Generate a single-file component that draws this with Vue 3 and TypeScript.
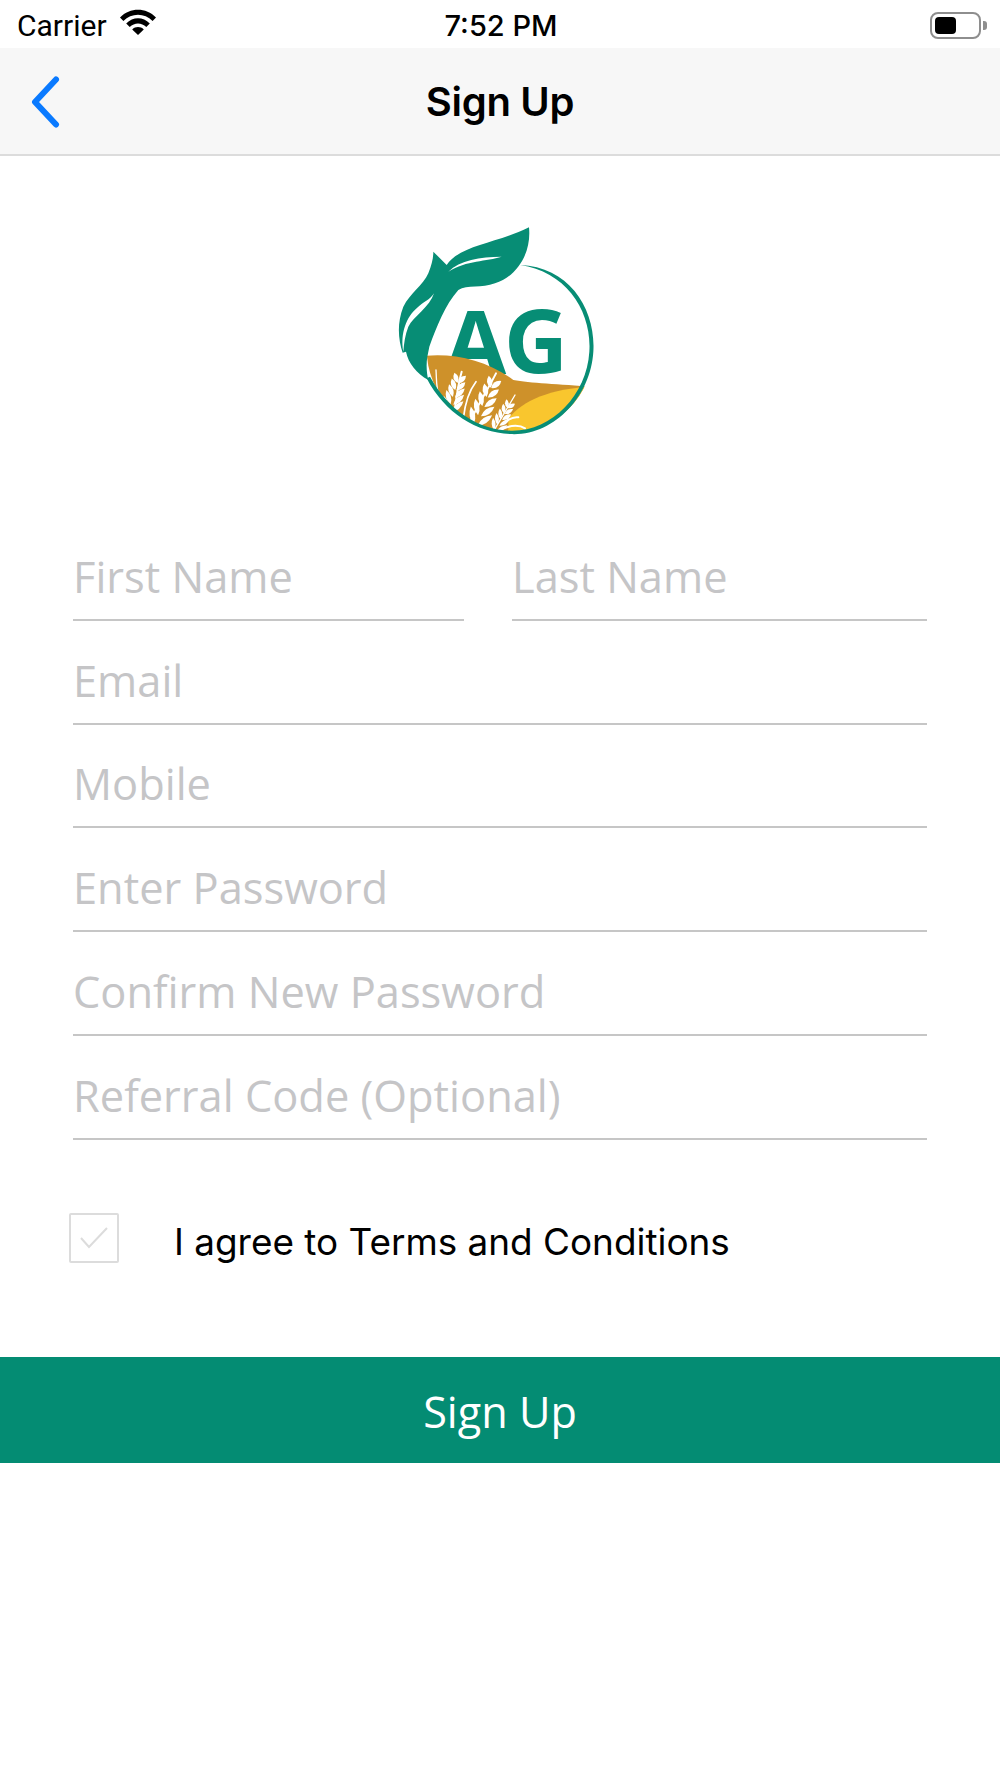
<script setup lang="ts">
interface Ear {
  x1: number;
  y1: number;
  x2: number;
  y2: number;
  size: number;
}

const nameFields = ["First Name", "Last Name"];
const fields = ["Email", "Mobile", "Enter Password", "Confirm New Password", "Referral Code (Optional)"];

const ears: Ear[] = [
  { x1: 210, y1: 605, x2: 240, y2: 495, size: 24 },
  { x1: 285, y1: 650, x2: 345, y2: 505, size: 27 },
  { x1: 345, y1: 665, x2: 392, y2: 575, size: 19 },
];

// grain pairs along each ear, leaning out from the stalk
function grains(ear: Ear) {
  const out: { x: number; y: number; rot: number; d: string }[] = [];
  const dx = ear.x2 - ear.x1;
  const dy = ear.y2 - ear.y1;
  const len = Math.hypot(dx, dy);
  const angle = (Math.atan2(dy, dx) * 180) / Math.PI;
  const nx = -dy / len;
  const ny = dx / len;
  for (let i = 0; i < 5; i++) {
    const t = 0.18 + i * 0.18;
    const spread = ear.size * (1 - i * 0.12) * 0.75;
    const rx = ear.size * (1 - i * 0.08);
    const ry = ear.size * 0.62;
    for (const side of [-1, 1]) {
      out.push({
        x: ear.x1 + dx * t + nx * spread * side,
        y: ear.y1 + dy * t + ny * spread * side,
        rot: angle + 32 * side,
        d: `M${-rx} 0Q0 ${-ry} ${rx} 0Q0 ${ry} ${-rx} 0Z`,
      });
    }
  }
  return out;
}
</script>

<template>
  <main class="page">
    <div class="status-bar">
      <div class="status-left">
        <span class="carrier">Carrier</span>
        <svg class="wifi" viewBox="0 0 38 26" width="38" height="26">
          <path d="M1 8.5C11 -1.8 27 -1.8 37 8.5L33.6 12C25.5 3.8 12.5 3.8 4.4 12Z" fill="#000" />
          <path d="M7.2 14.6C14 7.6 24 7.6 30.8 14.6L27.3 18C22.5 13.2 15.5 13.2 10.7 18Z" fill="#000" />
          <path d="M13.2 20.4C16.5 17.2 21.5 17.2 24.8 20.4L19 26Z" fill="#000" />
        </svg>
      </div>
      <span class="time">7:52 PM</span>
      <div class="battery">
        <div class="battery-body"><div class="battery-level"></div></div>
        <div class="battery-cap"></div>
      </div>
    </div>

    <header class="nav">
      <button class="back" aria-label="Back">
        <svg viewBox="0 0 30 52" width="30" height="52">
          <path d="M26 3.5L5 26L26 48.5" fill="none" stroke="#0a7aff" stroke-width="6" stroke-linecap="round" stroke-linejoin="round" />
        </svg>
      </button>
      <h1>Sign Up</h1>
    </header>

    <div class="logo-wrap">
      <svg class="logo" viewBox="0 0 690 720" width="230" height="240">
        <defs>
          <clipPath id="disc">
            <circle cx="390" cy="418" r="250" />
          </clipPath>
        </defs>
        <text x="196" y="492" class="logo-text">A</text>
        <text x="372" y="490" class="logo-text">G</text>
        <g clip-path="url(#disc)">
          <path d="M130 438C220 428 320 450 400 510C450 520 540 522 650 532V700H130Z" fill="#ce912a" />
          <path d="M385 625C430 570 510 535 650 528V700H385Z" fill="#f9c62e" />
          <g fill="none" stroke="#fff" stroke-linecap="round">
            <path d="M168 480C170 510 168 535 178 560" stroke-width="4" />
            <path d="M222 620C228 570 232 530 245 485" stroke-width="6" />
            <path d="M250 625C255 580 265 545 288 515" stroke-width="5" />
            <path d="M268 640C290 590 320 545 348 490" stroke-width="6" />
            <path d="M340 665C360 630 385 590 405 555" stroke-width="4" />
            <path d="M375 635C390 625 405 620 415 622" stroke-width="6" />
            <path d="M372 655C395 645 420 645 435 655" stroke-width="6" />
          </g>
          <g fill="#fff">
            <template v-for="(ear, i) in ears" :key="i">
              <path
                v-for="(g, j) in grains(ear)"
                :key="j"
                :d="g.d"
                :transform="`translate(${g.x} ${g.y}) rotate(${g.rot})`"
              />
            </template>
          </g>
        </g>
        <path
          d="M420 165C570 170 648 300 640 425C632 560 520 680 390 672C290 668 195 610 140 505L150 500C205 600 295 660 392 662C515 665 620 555 628 425C636 305 560 185 420 165Z"
          fill="#078d75"
        />
        <path
          d="M160 125L200 165C240 105 350 100 447 52C455 130 410 200 345 220C305 235 262 224 235 240C195 285 170 350 148 410L142 440C138 465 140 490 145 510C110 490 85 460 78 425L68 428C55 390 50 340 70 290C90 250 130 225 145 190C155 165 160 145 160 125Z"
          fill="#078d75"
        />
        <path d="M205 185C240 150 300 140 365 140C320 155 260 150 205 185Z" fill="#fff" />
        <path d="M162 250C150 290 100 320 85 350C75 375 72 400 70 425C60 370 80 320 110 295C130 275 150 270 162 250Z" fill="#fff" />
      </svg>
    </div>

    <form class="form" @submit.prevent>
      <div class="name-row">
        <div v-for="name in nameFields" :key="name" class="field">{{ name }}</div>
      </div>
      <div v-for="name in fields" :key="name" class="field">{{ name }}</div>
    </form>

    <div class="terms">
      <span class="checkbox">
        <svg viewBox="0 0 30 24" width="30" height="24">
          <path d="M2 12L10 21L28 2" fill="none" stroke="#dcdcdc" stroke-width="2" />
        </svg>
      </span>
      <span class="terms-label">I agree to Terms and Conditions</span>
    </div>

    <button class="submit">Sign Up</button>
  </main>
</template>

<style scoped>
.page {
  width: 1000px;
  height: 1778px;
  background: #fff;
  font-family: Inter, "Liberation Sans", sans-serif;
  color: #000;
}

.status-bar {
  height: 48px;
  display: grid;
  grid-template-columns: 1fr auto 1fr;
  align-items: center;
  padding: 0 13px 0 17px;
  box-sizing: border-box;
}

.status-left {
  display: flex;
  align-items: center;
  gap: 12px;
}

.carrier {
  font-family: Roboto, sans-serif;
  font-size: 30px;
  margin-top: 2px;
}

.wifi {
  margin-top: -4px;
}

.time {
  font-size: 29px;
  font-weight: 500;
  margin: 2px 2px 0 0;
}

.battery {
  justify-self: end;
  display: flex;
  align-items: center;
  margin-top: 2px;
}

.battery-body {
  width: 51px;
  height: 27px;
  box-sizing: border-box;
  border: 2px solid #8e8e8e;
  border-radius: 8px;
  padding: 3px;
}

.battery-level {
  width: 21px;
  height: 100%;
  background: #000;
  border-radius: 4px;
}

.battery-cap {
  width: 4px;
  height: 9px;
  margin-left: 2px;
  background: #8e8e8e;
  border-radius: 0 3px 3px 0;
}

.nav {
  position: relative;
  height: 108px;
  box-sizing: border-box;
  background: #f7f7f7;
  border-bottom: 2px solid #dcdcdc;
  display: flex;
  align-items: center;
  justify-content: center;
}

.nav h1 {
  margin: 0;
  font-size: 40px;
  font-weight: 600;
  letter-spacing: -0.3px;
}

.back {
  position: absolute;
  left: 30px;
  top: 28px;
  padding: 0;
  border: 0;
  background: none;
  display: flex;
}

.logo-wrap {
  display: flex;
  justify-content: center;
  padding: 54px 0 0 0;
  height: 240px;
  margin-left: -10px;
}

.logo-text {
  font-family: "Open Sans", sans-serif;
  font-weight: 700;
  font-size: 265px;
  fill: #078d75;
}

.form {
  margin-top: 67px;
  padding: 0 73px;
}

.name-row {
  display: grid;
  grid-template-columns: 391px 1fr;
  column-gap: 48px;
}

.field {
  height: 103.75px;
  box-sizing: border-box;
  border-bottom: 2px solid #c6c6c6;
  display: flex;
  align-items: flex-end;
  padding: 0 0 15px 0;
  font-family: "Open Sans", sans-serif;
  font-size: 43.4px;
  line-height: 54px;
  color: #c5c5c7;
}

.terms {
  display: flex;
  align-items: center;
  margin-top: 73px;
  padding-left: 69px;
}

.checkbox {
  width: 50px;
  height: 50px;
  box-sizing: border-box;
  border: 2px solid #dcdcdc;
  border-radius: 2px;
  display: flex;
  align-items: center;
  justify-content: center;
}

.terms-label {
  margin-left: 55px;
  font-size: 36.9px;
  margin-top: 6px;
}

.submit {
  display: block;
  width: 100%;
  height: 106px;
  margin-top: 93px;
  padding: 3px 0 0;
  border: 0;
  background: #048c73;
  color: #fff;
  font-family: "Open Sans", sans-serif;
  font-size: 43.2px;
}
</style>

<style>
body {
  background: #fff;
}
</style>
